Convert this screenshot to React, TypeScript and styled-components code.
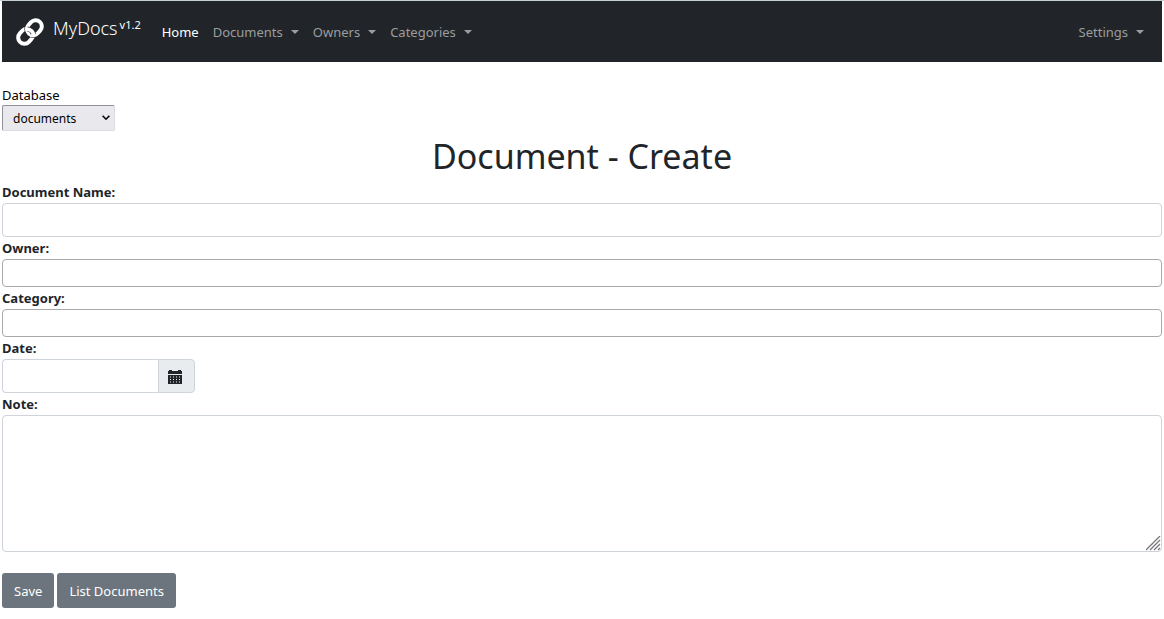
import React from "react";
import styled, { createGlobalStyle } from "styled-components";

const GlobalStyle = createGlobalStyle`
  *, *::before, *::after { box-sizing: border-box; }
  body {
    margin: 0;
    background: #fff;
    color: #212529;
    font-family: "Noto Sans", "Open Sans", sans-serif;
    font-size: 13px;
    line-height: 22px;
  }
  button, input, select, textarea { font: inherit; color: inherit; }
`;

const Page = styled.div`
  padding: 0 2px;
  border-top: 1px solid #c5cfd2;
`;

const Navbar = styled.nav`
  display: flex;
  align-items: center;
  height: 61px;
  padding: 0 11px 0 13px;
  background: #212529;
`;

const Brand = styled.a`
  display: flex;
  align-items: center;
  gap: 8px;
  margin-right: 14px;
  color: #fff;
  text-decoration: none;
`;

const BrandName = styled.span`
  padding-bottom: 8px;
  font-size: 18px;
  font-weight: 300;
  line-height: 24px;
`;

const Version = styled.sup`
  margin-left: 2px;
  font-size: 11px;
  font-weight: 400;
  line-height: 0;
  vertical-align: 6px;
`;

const NavList = styled.ul<{ $end?: boolean }>`
  display: flex;
  margin: 0 0 0 ${(p) => (p.$end ? "auto" : "0")};
  padding: 0;
  list-style: none;
`;

const NavLink = styled.a<{ $active?: boolean }>`
  display: flex;
  align-items: center;
  gap: 8px;
  padding: 0 7px;
  color: ${(p) => (p.$active ? "#fff" : "#9b9d9f")};
  text-decoration: none;
`;

const Caret = styled.span`
  border: 4px solid transparent;
  border-top-color: currentColor;
  border-bottom: 0;
`;

const Main = styled.main`
  padding-top: 23px;
`;

const Database = styled.div`
  display: flex;
  flex-direction: column;
  align-items: flex-start;
  color: #000;
  line-height: 20px;
`;

const SelectWrap = styled.div`
  display: grid;
  width: 113px;
  align-items: center;
  & > * { grid-area: 1 / 1; }
  & > svg { justify-self: end; margin-right: 5px; pointer-events: none; }
`;

const Select = styled.select`
  appearance: none;
  width: 100%;
  height: 26px;
  padding: 1px 10px 0;
  font-size: 12px;
  border: 1px solid #dcdce0;
  border-top-color: #8f8f9d;
  border-left-color: #8f8f9d;
  border-radius: 2px;
  background: #e9e9ed;
`;

const Title = styled.h1`
  margin: 0;
  font-size: 34px;
  font-weight: 400;
  line-height: 50px;
  text-align: center;
`;

const Field = styled.div`
  display: flex;
  flex-direction: column;
`;

const Label = styled.label`
  font-weight: 700;
`;

const TextInput = styled.input<{ $compact?: boolean }>`
  width: 100%;
  height: ${(p) => (p.$compact ? 28 : 34)}px;
  padding: 0 10px;
  border: 1px solid ${(p) => (p.$compact ? "#aaa" : "#ced4da")};
  border-radius: 4px;
  background: #fff;
`;

const DateGroup = styled.div`
  display: flex;
  width: 193px;
`;

const DateInput = styled(TextInput)`
  flex: 1;
  min-width: 0;
  border-right: 0;
  border-radius: 4px 0 0 4px;
`;

const DateButton = styled.button`
  display: grid;
  place-items: center;
  width: 37px;
  padding: 1px 3px 0 0;
  border: 1px solid #ced4da;
  border-radius: 0 4px 4px 0;
  background: #e9ecef;
`;

const NoteWrap = styled.div`
  display: grid;
  & > * { grid-area: 1 / 1; }
  & > svg { place-self: end; margin: 0 1px 1px 0; pointer-events: none; }
`;

const Note = styled.textarea`
  display: block;
  width: 100%;
  height: 137px;
  padding: 6px 10px;
  border: 1px solid #ced4da;
  border-radius: 4px;
  background: #fff;
  resize: none;
`;

const Actions = styled.div`
  display: flex;
  gap: 3px;
  padding: 21px 0 11px;
`;

const Button = styled.button`
  height: 35px;
  padding: 0 12px;
  border: 0;
  border-radius: 3px;
  background: #6c757d;
  color: #fff;
`;

const ChainLogo = () => (
  <svg width="30" height="30" viewBox="0 0 30 30" fill="none" aria-hidden="true">
    <g strokeWidth="4">
      <rect x="-8" y="-6.2" width="16" height="12.4" rx="6.2" transform="translate(10.6 19.3) rotate(-47)" stroke="#fff" />
      <rect x="-8" y="-6.2" width="16" height="12.4" rx="6.2" transform="translate(19.4 10.7) rotate(-47)" stroke="#212529" strokeWidth="5.2" />
      <rect x="-8" y="-6.2" width="16" height="12.4" rx="6.2" transform="translate(19.4 10.7) rotate(-47)" stroke="#fff" />
    </g>
    <path d="M12.4 12.2C15.6 12.4 18 14.6 18.2 17.4" stroke="#212529" strokeWidth="5.2" />
    <path d="M10.4 12.5C14.8 11.5 18.4 14.2 18.4 18.2" stroke="#fff" strokeWidth="3.8" />
  </svg>
);

const CalendarIcon = () => (
  <svg width="14" height="14" viewBox="0 0 14 14" fill="#212529" aria-hidden="true">
    <path d="M0 4V1h1V0h3v1h6V0h3v1h1v3zM0 5h14v9H0z" />
    <path
      d="M2 7h1M5 7h1M8 7h1M11 7h1M2 9.5h1M5 9.5h1M8 9.5h1M11 9.5h1M2 12h1M5 12h1M8 12h1M11 12h1"
      stroke="#e9ecef"
      strokeWidth="1"
    />
  </svg>
);

const menus = ["Documents", "Owners", "Categories"];

const MenuLink = ({ name }: { name: string }) => (
  <li>
    <NavLink href="#" aria-haspopup="true">
      {name}
      <Caret />
    </NavLink>
  </li>
);

export default function App() {
  return (
    <>
      <GlobalStyle />
      <Page>
        <Navbar>
          <Brand href="#">
            <ChainLogo />
            <BrandName>
              MyDocs<Version>v1.2</Version>
            </BrandName>
          </Brand>
          <NavList>
            <li>
              <NavLink href="#" $active>Home</NavLink>
            </li>
            {menus.map((name) => (
              <MenuLink key={name} name={name} />
            ))}
          </NavList>
          <NavList $end>
            <MenuLink name="Settings" />
          </NavList>
        </Navbar>
        <Main>
          <Database>
            <label htmlFor="database">Database</label>
            <SelectWrap>
              <Select id="database" defaultValue="documents">
                <option>documents</option>
              </Select>
              <svg width="8" height="6" viewBox="0 0 8 6" fill="none" stroke="#000" strokeWidth="1.6" aria-hidden="true">
                <path d="M.6 .8L4 4.2L7.4 .8" />
              </svg>
            </SelectWrap>
          </Database>
          <Title>Document - Create</Title>
          <form onSubmit={(e) => e.preventDefault()}>
            <Field>
              <Label htmlFor="name">Document Name:</Label>
              <TextInput id="name" />
            </Field>
            <Field>
              <Label htmlFor="owner">Owner:</Label>
              <TextInput id="owner" $compact />
            </Field>
            <Field>
              <Label htmlFor="category">Category:</Label>
              <TextInput id="category" $compact />
            </Field>
            <Field>
              <Label htmlFor="date">Date:</Label>
              <DateGroup>
                <DateInput id="date" />
                <DateButton type="button" aria-label="Pick a date">
                  <CalendarIcon />
                </DateButton>
              </DateGroup>
            </Field>
            <Field>
              <Label htmlFor="note">Note:</Label>
              <NoteWrap>
                <Note id="note" />
                <svg width="15" height="15" viewBox="0 0 15 15" stroke="#77777b" strokeWidth="1.3" aria-hidden="true">
                  <path d="M0 14L14 0M4 14L14 4M8 14L14 8M12 14L14 12" />
                </svg>
              </NoteWrap>
            </Field>
            <Actions>
              <Button type="submit">Save</Button>
              <Button type="button">List Documents</Button>
            </Actions>
          </form>
        </Main>
      </Page>
    </>
  );
}
